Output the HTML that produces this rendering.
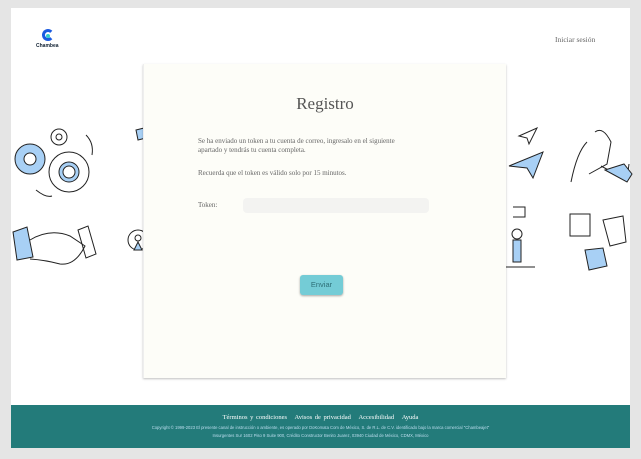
<!DOCTYPE html>
<html><head><meta charset="utf-8"><style>
*{margin:0;padding:0;box-sizing:border-box}
body{width:641px;height:459px;background:#e5e5e5;position:relative;overflow:hidden;font-family:"Liberation Serif",serif;color:#444}
.page{position:absolute;left:11px;top:8px;width:619px;height:397px;background:#fff}
.card{position:absolute;left:143px;top:64px;width:363px;height:314px;background:#fdfdf8;box-shadow:0 1px 2px rgba(0,0,0,.25);border-left:1px solid #eee}
.footer{position:absolute;left:11px;top:405px;width:619px;height:43px;background:#237b7a;color:#fff;text-align:center;font-family:"Liberation Sans",sans-serif}
svg{position:absolute}
</style></head><body>
<div class="page"></div>
<div style="position:absolute;left:42px;top:29px;width:12px;height:12px;border-radius:50%;border:3.5px solid #1a5be0;border-right-color:transparent"></div>
<div style="position:absolute;left:46px;top:34px;width:4px;height:4px;border-radius:50%;background:#3cc;"></div>
<div style="position:absolute;left:36px;top:43px;font:bold 5px 'Liberation Sans',sans-serif;color:#123">Chambea</div>
<div style="position:absolute;left:555px;top:35px;font-size:7.5px;color:#666">Iniciar sesión</div>

<svg width="140" height="170" style="left:8px;top:120px" fill="none" stroke="#222" stroke-width="1">
<circle cx="22" cy="39" r="15" fill="#a8d0f5"/><circle cx="22" cy="39" r="6" fill="#fff"/>
<circle cx="61" cy="52" r="20" fill="#fff"/><circle cx="61" cy="52" r="10" fill="#a8d0f5"/><circle cx="61" cy="52" r="6" fill="#fff"/>
<circle cx="51" cy="17" r="8"/><circle cx="51" cy="17" r="3"/>
<path d="M78 15 q8 8 6 20 M28 70 q10 8 16 6"/>
<path d="M5 112 l14 -5 l6 30 l-16 3z" fill="#a8d0f5"/>
<path d="M22 120 q20 -12 40 -4 l15 10 q-10 20 -25 18 q-15 -4 -30 -5"/>
<path d="M70 110 l10 -4 l8 28 l-10 4z"/>
<circle cx="130" cy="120" r="10"/><circle cx="130" cy="118" r="3"/><path d="M126 130 l4 -8 l4 8z" fill="#a8d0f5"/>
<path d="M128 10 l8 -2 l2 10 l-8 2z" fill="#a8d0f5"/>
</svg>

<svg width="130" height="160" style="left:505px;top:122px" fill="none" stroke="#222" stroke-width="1">
<path d="M14 14 l18 -8 l-8 16 l-2 -6z"/>
<path d="M4 44 l34 -14 l-10 26 l-6 -10z" fill="#a8d0f5"/>
<path d="M90 10 q8 -6 16 10 l-4 22 l-18 10 M82 20 q-10 10 -16 40 M96 44 l26 14 l2 -16" />
<path d="M100 48 l22 12 l5 -8 l-8 -10z" fill="#a8d0f5"/>
<path d="M8 85 l12 0 l0 10 l-12 0"/>
<circle cx="12" cy="112" r="5"/><path d="M8 118 l8 0 l0 22 l-8 0z" fill="#a8d0f5"/><path d="M0 145 l30 0"/>
<path d="M65 92 l20 0 l0 22 l-20 0z"/>
<path d="M98 98 l20 -4 l3 26 l-16 4z"/>
<path d="M80 128 l18 -2 l4 18 l-18 4z" fill="#a8d0f5"/>
</svg>

<div class="card">
<div style="position:absolute;left:0;width:100%;top:30px;text-align:center;font-size:17px;color:#555">Registro</div>
<div style="position:absolute;left:54px;top:73px;font-size:7px;line-height:8.5px;color:#666;width:280px">Se ha enviado un token a tu cuenta de correo, ingresalo en el siguiente<br>apartado y tendrás tu cuenta completa.</div>
<div style="position:absolute;left:54px;top:105px;font-size:7px;color:#666">Recuerda que el token es válido solo por 15 minutos.</div>
<div style="position:absolute;left:54px;top:137px;font-size:7px;color:#666">Token:</div>
<div style="position:absolute;left:99px;top:134px;width:186px;height:15px;background:#f3f3f1;border-radius:4px"></div>
<div style="position:absolute;left:156px;top:211px;width:43px;height:20px;background:#74ccd6;border-radius:3px;box-shadow:0 1px 2px rgba(0,0,0,.35);font:7.5px 'Liberation Sans',sans-serif;color:#2d6e76;text-align:center;line-height:20px">Enviar</div>
</div>

<div class="footer">
<div style="margin-top:9px;font:6.5px 'Liberation Serif',serif;word-spacing:1px">Términos y condiciones &nbsp; Avisos de privacidad &nbsp; Accesibilidad &nbsp; Ayuda</div>
<div style="margin-top:4px;font-size:4.2px;color:#bde">Copyright © 1999-2023 El presente canal de instrucción o ambiente, es operado por DoKomata Com de México, S. de R.L. de C.V. identificado bajo la marca comercial "Chambeajet"</div>
<div style="margin-top:3px;font-size:4.2px;color:#bde">Insurgentes Sur 1602 Piso 9 Suite 900, Crédito Constructor Benito Juarez, 03940 Ciudad de México, CDMX, México</div>
</div>
</body></html>
